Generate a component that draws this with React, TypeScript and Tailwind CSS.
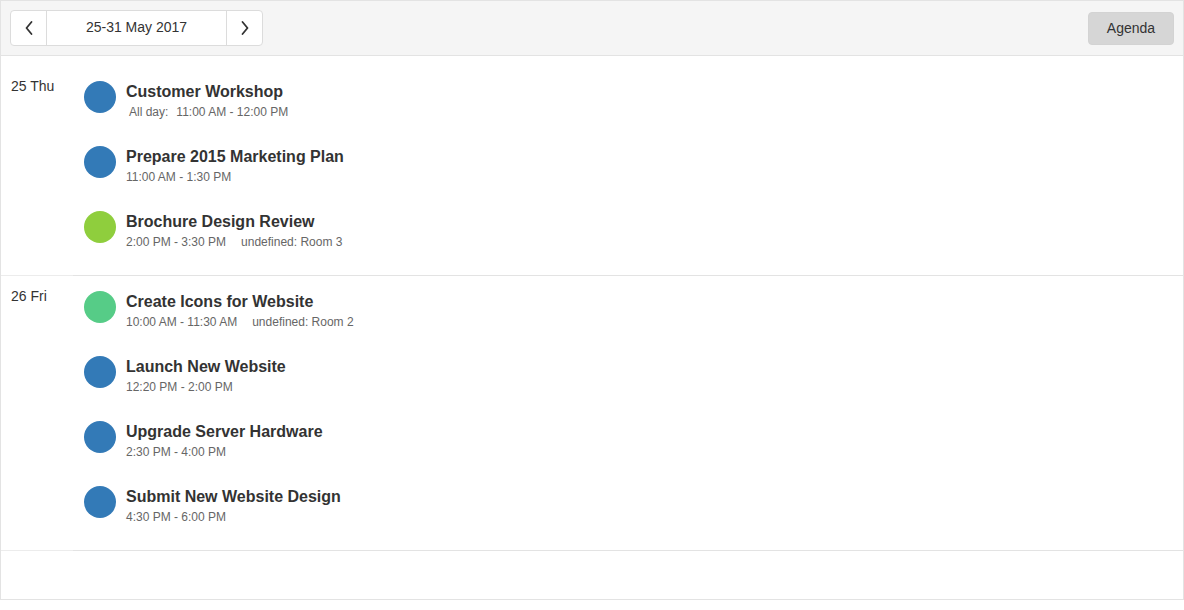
type Ev = { title: string; time: string; color: string; allDay?: boolean; extra?: string };

const days: { label: string; events: Ev[] }[] = [
  {
    label: "25 Thu",
    events: [
      { title: "Customer Workshop", time: "11:00 AM - 12:00 PM", color: "bg-[#337ab7]", allDay: true },
      { title: "Prepare 2015 Marketing Plan", time: "11:00 AM - 1:30 PM", color: "bg-[#337ab7]" },
      { title: "Brochure Design Review", time: "2:00 PM - 3:30 PM", color: "bg-[#8fce3d]", extra: "undefined: Room 3" },
    ],
  },
  {
    label: "26 Fri",
    events: [
      { title: "Create Icons for Website", time: "10:00 AM - 11:30 AM", color: "bg-[#56cc87]", extra: "undefined: Room 2" },
      { title: "Launch New Website", time: "12:20 PM - 2:00 PM", color: "bg-[#337ab7]" },
      { title: "Upgrade Server Hardware", time: "2:30 PM - 4:00 PM", color: "bg-[#337ab7]" },
      { title: "Submit New Website Design", time: "4:30 PM - 6:00 PM", color: "bg-[#337ab7]" },
    ],
  },
];

function Chevron({ dir }: { dir: "left" | "right" }) {
  return (
    <svg width="10" height="16" viewBox="0 0 10 16" fill="none" stroke="#333" strokeWidth="1.8" strokeLinecap="round" strokeLinejoin="round">
      {dir === "left" ? <path d="M7.5 2 L2.5 8 L7.5 14" /> : <path d="M2.5 2 L7.5 8 L2.5 14" />}
    </svg>
  );
}

export default function App() {
  return (
    <div className="h-[600px] w-[1184px] border border-[#e3e3e3] bg-white font-['Liberation_Sans',Arial,sans-serif] text-[#333]">
      {/* Toolbar */}
      <div className="flex h-[55px] items-start justify-between border-b border-[#e3e3e3] bg-[#f5f5f5] pl-[9px] pr-[9px]">
        <div className="mt-[9px] flex h-[36px] rounded-[4px] border border-[#dcdcdc] bg-white">
          <button className="flex w-[36px] items-center justify-center border-r border-[#dcdcdc]">
            <Chevron dir="left" />
          </button>
          <div className="w-[179px] pt-[6px] text-center text-[14px] leading-5">25-31 May 2017</div>
          <button className="flex w-[36px] items-center justify-center border-l border-[#dcdcdc]">
            <Chevron dir="right" />
          </button>
        </div>
        <button className="mt-[11px] h-[33px] w-[86px] rounded-[4px] border border-[#d3d3d3] bg-[#d6d6d6] text-[14px] text-[#333]">
          Agenda
        </button>
      </div>

      {/* Agenda */}
      <div className="pt-[10px]">
        {days.map((d) => (
          <div key={d.label} className="flex">
            <div className="w-[72px] shrink-0 border-b border-[#ececec] pl-[10px] pt-[10px] text-[14px] leading-5">{d.label}</div>
            <div className="flex flex-1 flex-col gap-[33px] border-b border-[#e3e3e3] pb-[32px] pl-[11px] pt-[15px]">
              {d.events.map((e) => (
                <div key={e.title} className="flex h-[32px] items-start">
                  <div className={`h-[32px] w-[32px] shrink-0 rounded-full ${e.color}`} />
                  <div className="ml-[10px] pt-[1px]">
                    <div className="text-[16px] font-bold leading-5 text-[#333]">{e.title}</div>
                    <div className="flex text-[12px] leading-5 text-[#666]">
                      {e.allDay && <span className="ml-[3px] mr-[8px]">All day:</span>}
                      <span>{e.time}</span>
                      {e.extra && <span className="ml-[15px]">{e.extra}</span>}
                    </div>
                  </div>
                </div>
              ))}
            </div>
          </div>
        ))}
      </div>
    </div>
  );
}
